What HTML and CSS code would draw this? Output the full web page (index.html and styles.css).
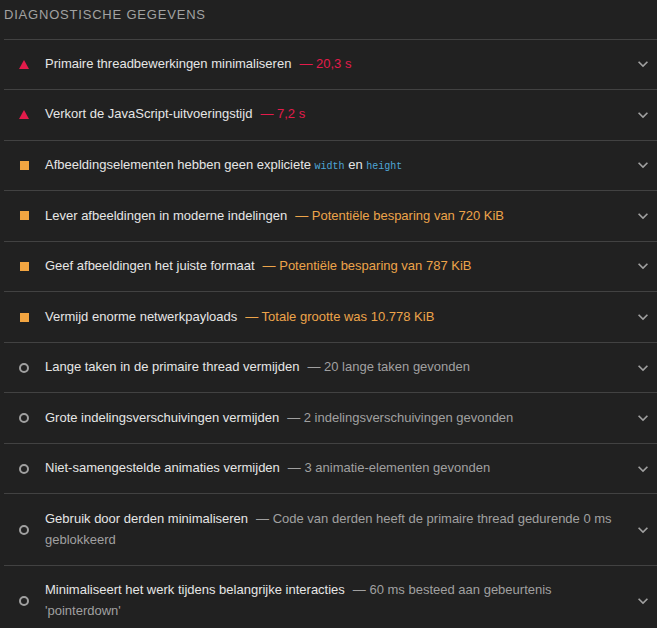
FILE: index.html
```html
<!DOCTYPE html>
<html lang="nl">
<head>
<meta charset="utf-8">
<title>Diagnostische gegevens</title>
<link rel="stylesheet" href="styles.css">
</head>
<body>
<section class="group">
  <h2 class="group-title">Diagnostische gegevens</h2>

  <div class="audit">
    <span class="icon icon-fail"></span>
    <div class="text"><span class="title">Primaire threadbewerkingen minimaliseren</span><span class="disp fail">— 20,3 s</span></div>
    <svg class="chev" viewBox="0 0 24 24"><path d="M16.59 8.59L12 13.17 7.41 8.59 6 10l6 6 6-6z"/></svg>
  </div>

  <div class="audit">
    <span class="icon icon-fail"></span>
    <div class="text"><span class="title">Verkort de JavaScript-uitvoeringstijd</span><span class="disp fail">— 7,2 s</span></div>
    <svg class="chev" viewBox="0 0 24 24"><path d="M16.59 8.59L12 13.17 7.41 8.59 6 10l6 6 6-6z"/></svg>
  </div>

  <div class="audit">
    <span class="icon icon-avg"></span>
    <div class="text"><span class="title">Afbeeldingselementen hebben geen expliciete <code>width</code> en <code>height</code></span></div>
    <svg class="chev" viewBox="0 0 24 24"><path d="M16.59 8.59L12 13.17 7.41 8.59 6 10l6 6 6-6z"/></svg>
  </div>

  <div class="audit">
    <span class="icon icon-avg"></span>
    <div class="text"><span class="title">Lever afbeeldingen in moderne indelingen</span><span class="disp avg">— Potentiële besparing van 720 KiB</span></div>
    <svg class="chev" viewBox="0 0 24 24"><path d="M16.59 8.59L12 13.17 7.41 8.59 6 10l6 6 6-6z"/></svg>
  </div>

  <div class="audit">
    <span class="icon icon-avg"></span>
    <div class="text"><span class="title">Geef afbeeldingen het juiste formaat</span><span class="disp avg">— Potentiële besparing van 787 KiB</span></div>
    <svg class="chev" viewBox="0 0 24 24"><path d="M16.59 8.59L12 13.17 7.41 8.59 6 10l6 6 6-6z"/></svg>
  </div>

  <div class="audit">
    <span class="icon icon-avg"></span>
    <div class="text"><span class="title">Vermijd enorme netwerkpayloads</span><span class="disp avg">— Totale grootte was 10.778 KiB</span></div>
    <svg class="chev" viewBox="0 0 24 24"><path d="M16.59 8.59L12 13.17 7.41 8.59 6 10l6 6 6-6z"/></svg>
  </div>

  <div class="audit">
    <span class="icon icon-info"></span>
    <div class="text"><span class="title">Lange taken in de primaire thread vermijden</span><span class="disp">— 20 lange taken gevonden</span></div>
    <svg class="chev" viewBox="0 0 24 24"><path d="M16.59 8.59L12 13.17 7.41 8.59 6 10l6 6 6-6z"/></svg>
  </div>

  <div class="audit">
    <span class="icon icon-info"></span>
    <div class="text"><span class="title">Grote indelingsverschuivingen vermijden</span><span class="disp">— 2 indelingsverschuivingen gevonden</span></div>
    <svg class="chev" viewBox="0 0 24 24"><path d="M16.59 8.59L12 13.17 7.41 8.59 6 10l6 6 6-6z"/></svg>
  </div>

  <div class="audit">
    <span class="icon icon-info"></span>
    <div class="text"><span class="title">Niet-samengestelde animaties vermijden</span><span class="disp">— 3 animatie-elementen gevonden</span></div>
    <svg class="chev" viewBox="0 0 24 24"><path d="M16.59 8.59L12 13.17 7.41 8.59 6 10l6 6 6-6z"/></svg>
  </div>

  <div class="audit">
    <span class="icon icon-info"></span>
    <div class="text"><span class="title">Gebruik door derden minimaliseren</span><span class="disp">— Code van derden heeft de primaire thread gedurende 0 ms geblokkeerd</span></div>
    <svg class="chev" viewBox="0 0 24 24"><path d="M16.59 8.59L12 13.17 7.41 8.59 6 10l6 6 6-6z"/></svg>
  </div>

  <div class="audit">
    <span class="icon icon-info"></span>
    <div class="text"><span class="title">Minimaliseert het werk tijdens belangrijke interacties</span><span class="disp">— 60 ms besteed aan gebeurtenis 'pointerdown'</span></div>
    <svg class="chev" viewBox="0 0 24 24"><path d="M16.59 8.59L12 13.17 7.41 8.59 6 10l6 6 6-6z"/></svg>
  </div>
</section>
</body>
</html>
```

FILE: styles.css
```css
html, body {
  margin: 0;
  padding: 0;
  background: #212121;
}

body {
  font-family: "Liberation Sans", Arial, sans-serif;
  font-size: 13px;
  color: #e4e4e4;
  overflow: hidden;
}

.group {
  margin-left: 4px;
}

.group-title {
  margin: 0;
  padding: 4.5px 0 14px 0;
  font-size: 13px;
  font-weight: normal;
  line-height: 20px;
  text-transform: uppercase;
  letter-spacing: 0.8px;
  color: #a2a2a2;
}

.audit {
  display: flex;
  align-items: center;
  border-top: 1px solid #424242;
  padding: 14.375px 4px 14.375px 15px;
  line-height: 20.8px;
}

.icon {
  flex: none;
  width: 10px;
  display: flex;
  justify-content: center;
  align-items: center;
  margin-right: 16px;
}

.icon-fail::before {
  content: "";
  width: 0;
  height: 0;
  border-left: 5px solid transparent;
  border-right: 5px solid transparent;
  border-bottom: 9px solid #e31b4b;
}

.icon-avg::before {
  content: "";
  width: 9px;
  height: 9px;
  background: #f2a541;
}

.icon-info::before {
  content: "";
  box-sizing: border-box;
  width: 10px;
  height: 10px;
  border: 2px solid #a0a0a0;
  border-radius: 50%;
}

.text {
  flex: 1;
  min-width: 0;
}

.title {
  color: #e6e6e6;
}

.disp {
  margin-left: 8px;
  color: #a0a0a0;
}

.disp.fail {
  color: #e31b4b;
}

.disp.avg {
  color: #eda44a;
}

code {
  font-family: "Liberation Mono", "DejaVu Sans Mono", monospace;
  font-size: 10px;
  line-height: 1;
  color: #4fa6d6;
}

.chev {
  flex: none;
  width: 20px;
  height: 20px;
  margin-left: 8px;
  fill: #a0a0a0;
}
```
